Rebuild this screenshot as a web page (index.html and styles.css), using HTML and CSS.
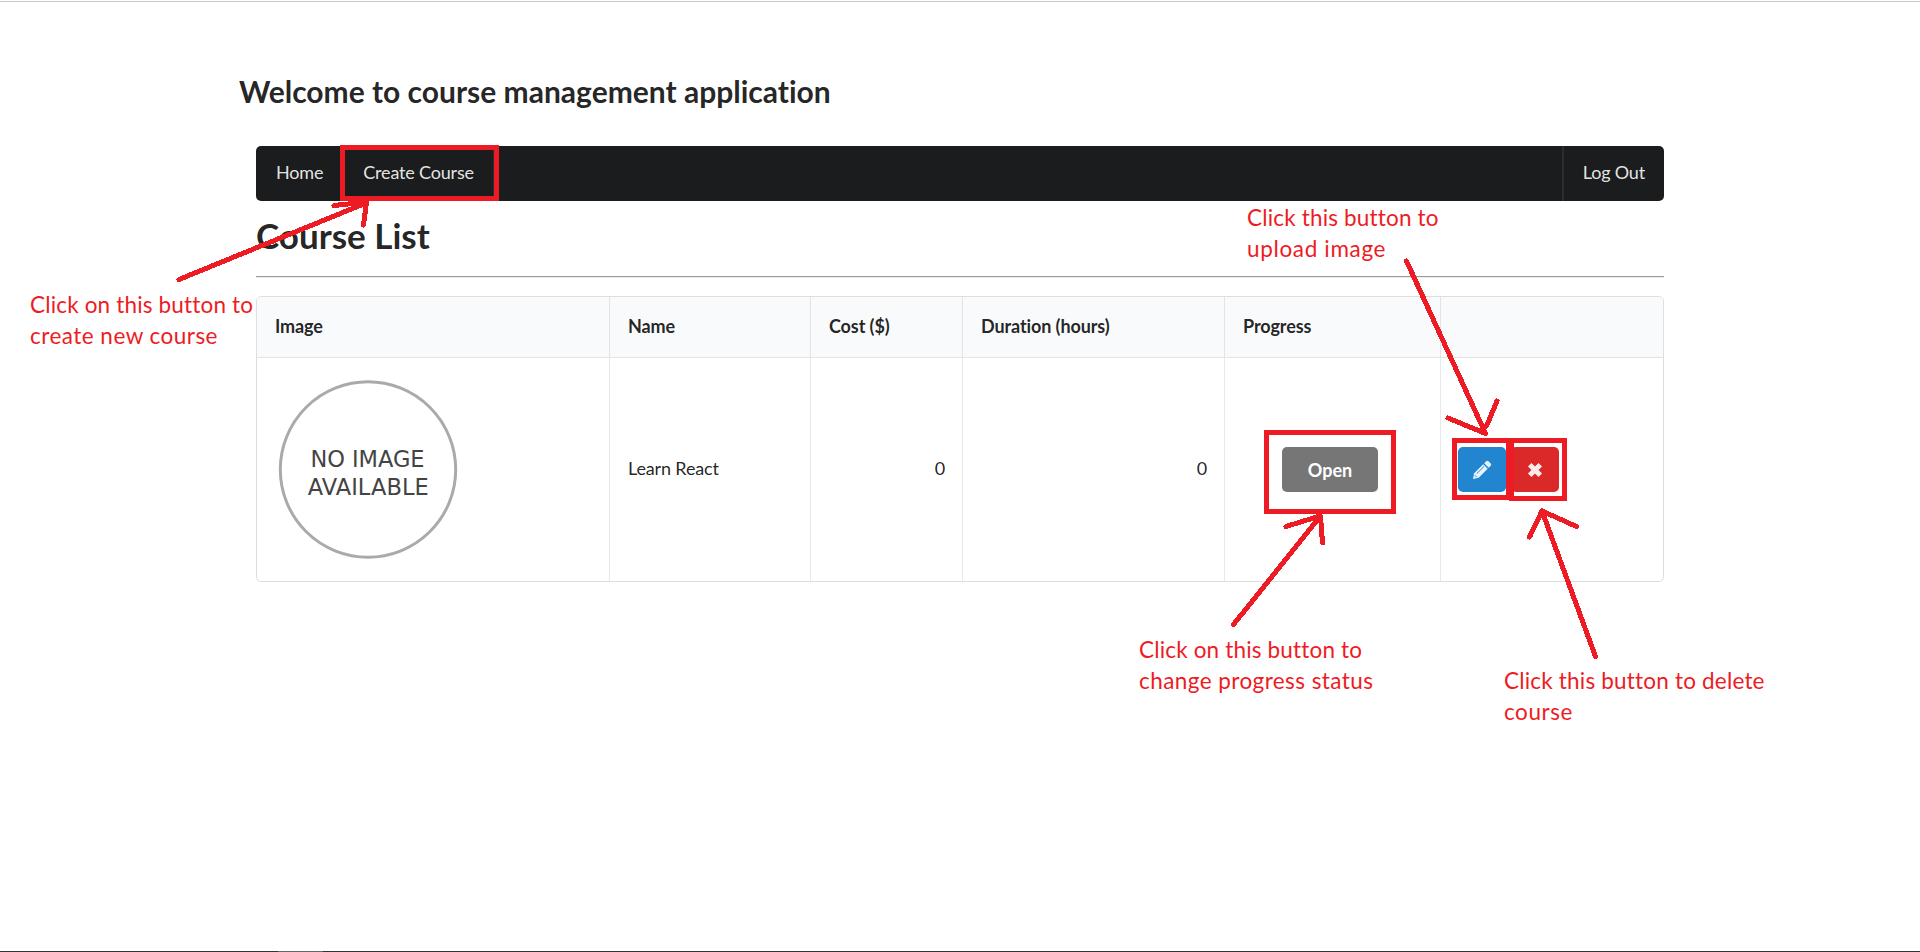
FILE: index.html
```html
<!DOCTYPE html>
<html lang="en">
<head>
<meta charset="utf-8">
<title>Course management</title>
<link rel="stylesheet" href="styles.css">
</head>
<body>
<div class="page">
  <h2 class="welcome">Welcome to course management application</h2>
  <main class="container">
    <nav class="menu">
      <a class="item">Home</a>
      <a class="item">Create Course</a>
      <a class="item right">Log Out</a>
    </nav>
    <h1 class="title">Course List</h1>
    <div class="rule"></div>
    <table class="courses">
      <colgroup><col class="c-image"><col class="c-name"><col class="c-cost"><col class="c-duration"><col class="c-progress"><col class="c-actions"></colgroup>
      <thead>
        <tr><th>Image</th><th>Name</th><th>Cost ($)</th><th>Duration (hours)</th><th>Progress</th><th></th></tr>
      </thead>
      <tbody>
        <tr>
          <td>
            <svg class="placeholder" width="188" height="188" viewBox="0 0 188 188">
              <circle cx="93" cy="93.500" r="87.700"/>
              <text x="35.500" y="91" textLength="114">NO IMAGE</text>
              <text x="32.700" y="118.800" textLength="121">AVAILABLE</text>
            </svg>
          </td>
          <td class="text">Learn React</td>
          <td class="text num">0</td>
          <td class="text num">0</td>
          <td class="progress"><button class="button open">Open</button></td>
          <td class="tools"><div class="actions">
            <button class="button icon blue" aria-label="Upload image">
              <svg width="20" height="20" viewBox="0 0 20 20"><path class="fill" d="M1 19 2.200 13.300 11.200 4.300 15.700 8.800 6.700 17.800Z"/><path class="fill" d="m12.200 3.300 2-2q1.200-1 2.400 0l2.100 2.100q1.200 1.200 0 2.400l-2 2Z"/><path class="blue-line" d="m4.700 13.700 7.300-7.300M2.800 15.200l2 2"/></svg>
            </button>
            <button class="button icon red" aria-label="Delete course">
              <svg width="20" height="20" viewBox="0 0 20 20"><path class="cross" d="m4.700 4.700 10.600 10.600M15.300 4.700 4.700 15.300"/></svg>
            </button>
          </div></td>
        </tr>
      </tbody>
    </table>
  </main>
  <div class="taskbar"><span></span></div>
</div>
<svg class="notes" width="1920" height="952" viewBox="0 0 1920 952">
  <g class="boxes">
    <rect x="342.500" y="147.500" width="154" height="51"/>
    <rect x="1266.500" y="432.500" width="127" height="79"/>
    <rect x="1454.500" y="440.500" width="54" height="57"/>
    <rect x="1511.500" y="440.500" width="53" height="58"/>
  </g>
  <g class="arrows">
    <path d="M179 279.500 366 203M334 205.500l33-3.500M363.500 225l3-23"/>
    <path d="m1406.500 261 79 172.500M1448 418l37.500 15.500M1497 401l-10.500 25"/>
    <path d="m1233.500 624.500 87-108.500M1286 526.500l34-10.500M1322.500 543l-2-27"/>
    <path d="M1595.500 656.500 1542 511M1529.500 537l12.500-26 34.500 15.500"/>
  </g>
  <g class="labels">
    <text x="30" y="313" textLength="223">Click on this button to</text>
    <text x="30" y="343.700" textLength="187.500">create new course</text>
    <text x="1247" y="226" textLength="191.500">Click this button to</text>
    <text x="1247" y="257" textLength="138.500">upload image</text>
    <text x="1139" y="658" textLength="223">Click on this button to</text>
    <text x="1139" y="689" textLength="234">change progress status</text>
    <text x="1504" y="689" textLength="260.500">Click this button to delete</text>
    <text x="1504" y="720" textLength="68.500">course</text>
  </g>
</svg>
</body>
</html>
```
FILE: styles.css
```css
* { box-sizing: border-box; }
body {
  margin: 0;
  background: #fff;
  color: rgba(0, 0, 0, .87);
  font: 17.5px/25px Lato, "Liberation Sans", sans-serif;
  font-variant-ligatures: none;
  overflow: hidden;
}
.page {
  display: flex;
  flex-direction: column;
  height: 952px;
  padding-top: 1px;
}
.page::before {
  content: "";
  flex: none;
  height: 1px;
  background: #c8c8c8;
}
.welcome {
  margin: 70px 0 36px 239px;
  font-size: 30px;
  line-height: 38px;
  font-weight: 700;
}
.container {
  width: 1408px;
  margin-left: 256px;
}
.menu {
  display: flex;
  height: 55px;
  background: #1b1c1d;
  border-radius: 5px;
  color: rgba(255, 255, 255, .9);
  font-size: 18px;
  letter-spacing: -.18px;
}
.item {
  display: flex;
  align-items: center;
  padding: 0 19px 2px 20px;
  border-right: 1px solid rgba(255, 255, 255, .08);
}
.right {
  margin-left: auto;
  padding-left: 19px;
  border-left: 2px solid rgba(255, 255, 255, .08);
  border-right: 0;
}
.title {
  margin: 12px 0 19px;
  font-size: 35px;
  line-height: 44px;
  font-weight: 700;
}
.rule {
  height: 2px;
  border-top: 1px solid #9a9a9a;
  border-bottom: 1px solid #eee;
}
.courses {
  width: 1408px;
  margin-top: 18px;
  table-layout: fixed;
  border: 1px solid rgba(34, 36, 38, .15);
  border-radius: 5px;
  border-spacing: 0;
}
.c-image { width: 352px; }
.c-name { width: 201px; }
.c-cost { width: 152px; }
.c-duration { width: 262px; }
.c-progress { width: 216px; }
th, td {
  padding: 0 18px;
  border-left: 1px solid rgba(34, 36, 38, .1);
  text-align: left;
  vertical-align: middle;
}
th:first-child, td:first-child { border-left: 0; }
th {
  height: 61px;
  padding-bottom: 2px;
  background: #f9fafb;
  border-bottom: 1px solid rgba(34, 36, 38, .1);
  font-size: 18px;
  font-weight: 700;
  letter-spacing: -.1px;
}
th:first-child { border-top-left-radius: 4px; }
th:last-child { border-top-right-radius: 4px; }
td { height: 223px; }
.text {
  padding-bottom: 2px;
  font-size: 18px;
  letter-spacing: -.15px;
}
.num { padding-right: 17px; text-align: right; }
.placeholder { display: block; }
.placeholder circle { fill: none; stroke: #aaa; stroke-width: 3; }
.placeholder text { fill: #444; font: 22.500px "DejaVu Sans", sans-serif; }
.button {
  height: 45px;
  padding: 0;
  border: 0;
  border-radius: 5px;
  color: #fff;
  font: 700 18px/20px Lato, "Liberation Sans", sans-serif;
}
.open { width: 96px; background: #767676; }
.progress { padding: 0 0 0 57px; }
.tools { padding-left: 17px; }
.actions { display: flex; gap: 5px; }
.icon {
  display: flex;
  align-items: center;
  justify-content: center;
  width: 48px;
}
.blue { background: #2185d0; }
.red { background: #db2828; }
.fill { fill: #fff; opacity: .9; }
.blue-line { fill: none; stroke: #2185d0; stroke-width: 1; }
.cross { fill: none; stroke: #fff; stroke-width: 5; opacity: .9; }
.taskbar {
  flex: none;
  height: 1px;
  margin-top: auto;
  background: #333;
}
.taskbar span {
  display: block;
  width: 45px;
  height: 1px;
  margin-left: 278px;
  background: #666;
}
.notes { position: absolute; left: 0; top: 0; }
.boxes, .arrows { fill: none; stroke: #ed1c24; stroke-width: 5; shape-rendering: crispEdges; }
.arrows { stroke-linecap: round; stroke-linejoin: round; }
.labels { fill: #ed1c24; font: 22.500px Lato, "Liberation Sans", sans-serif; }
.labels text, .placeholder text { font-variant-ligatures: none; }
```
